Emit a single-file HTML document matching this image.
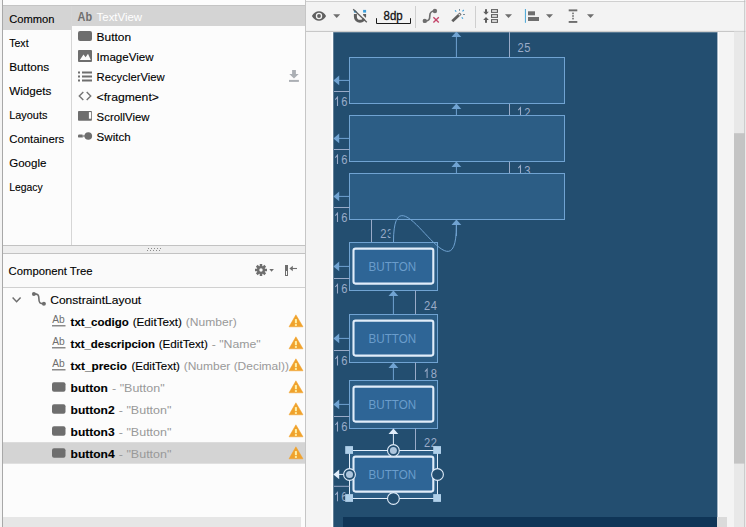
<!DOCTYPE html>
<html><head><meta charset="utf-8">
<style>
*{margin:0;padding:0}
html,body{width:746px;height:527px;overflow:hidden;background:#f2f2f2}
svg{display:block;position:absolute;left:0;top:0}
text{font-family:"Liberation Sans",sans-serif;white-space:pre}
</style></head><body>
<svg width="746" height="527" viewBox="0 0 746 527">

<rect x="0" y="0" width="746" height="527" fill="#f2f2f2"/>
<rect x="3" y="0" width="302" height="527" fill="#fcfcfc"/>
<rect x="0" y="0" width="2" height="527" fill="#f4f4f4"/>
<rect x="2" y="0" width="1" height="527" fill="#a8a8a8"/>
<rect x="3" y="5" width="302" height="1" fill="#c4c4c4"/>
<rect x="3" y="6" width="68" height="24" fill="#d4d4d4"/>
<rect x="71" y="6" width="1" height="239" fill="#d6d6d6"/>
<rect x="72" y="6" width="233" height="20" fill="#d4d4d4"/>
<rect x="305" y="0" width="1" height="527" fill="#c6c6c6"/>
<rect x="3" y="245" width="302" height="9" fill="#eeeeee"/>
<rect x="3" y="245" width="302" height="1" fill="#c2c2c2"/>
<rect x="3" y="253" width="302" height="1" fill="#c2c2c2"/>
<rect x="148" y="248" width="1" height="1" fill="#8c8c8c"/>
<rect x="147" y="250" width="1" height="1" fill="#8c8c8c"/>
<rect x="151" y="248" width="1" height="1" fill="#8c8c8c"/>
<rect x="150" y="250" width="1" height="1" fill="#8c8c8c"/>
<rect x="154" y="248" width="1" height="1" fill="#8c8c8c"/>
<rect x="153" y="250" width="1" height="1" fill="#8c8c8c"/>
<rect x="157" y="248" width="1" height="1" fill="#8c8c8c"/>
<rect x="156" y="250" width="1" height="1" fill="#8c8c8c"/>
<rect x="160" y="248" width="1" height="1" fill="#8c8c8c"/>
<rect x="159" y="250" width="1" height="1" fill="#8c8c8c"/>
<rect x="3" y="254" width="302" height="33" fill="#fafafa"/>
<rect x="3" y="287" width="302" height="1" fill="#d0d0d0"/>
<rect x="3" y="442.2" width="302" height="21.5" fill="#d4d4d4"/>
<rect x="3" y="517" width="298" height="10" fill="#e6e6e6"/>
<text x="9.2" y="22.8" font-size="11.6" font-weight="normal" fill="#000000" textLength="45.3" lengthAdjust="spacingAndGlyphs"  stroke="#000" stroke-width="0.12">Common</text>
<text x="9.2" y="46.8" font-size="11.6" font-weight="normal" fill="#000000" textLength="19.4" lengthAdjust="spacingAndGlyphs"  stroke="#000" stroke-width="0.12">Text</text>
<text x="9.2" y="70.8" font-size="11.6" font-weight="normal" fill="#000000" textLength="40" lengthAdjust="spacingAndGlyphs"  stroke="#000" stroke-width="0.12">Buttons</text>
<text x="9.2" y="94.8" font-size="11.6" font-weight="normal" fill="#000000" textLength="42.2" lengthAdjust="spacingAndGlyphs"  stroke="#000" stroke-width="0.12">Widgets</text>
<text x="9.2" y="118.8" font-size="11.6" font-weight="normal" fill="#000000" textLength="38.2" lengthAdjust="spacingAndGlyphs"  stroke="#000" stroke-width="0.12">Layouts</text>
<text x="9.2" y="142.8" font-size="11.6" font-weight="normal" fill="#000000" textLength="55" lengthAdjust="spacingAndGlyphs"  stroke="#000" stroke-width="0.12">Containers</text>
<text x="9.2" y="166.8" font-size="11.6" font-weight="normal" fill="#000000" textLength="37.2" lengthAdjust="spacingAndGlyphs"  stroke="#000" stroke-width="0.12">Google</text>
<text x="9.2" y="190.8" font-size="11.6" font-weight="normal" fill="#000000" textLength="33.5" lengthAdjust="spacingAndGlyphs"  stroke="#000" stroke-width="0.12">Legacy</text>
<text x="96.6" y="20.6" font-size="11.6" font-weight="normal" fill="#ffffff" textLength="45.5" lengthAdjust="spacingAndGlyphs" >TextView</text>
<text x="96.6" y="40.6" font-size="11.6" font-weight="normal" fill="#000000" textLength="34.5" lengthAdjust="spacingAndGlyphs"  stroke="#000" stroke-width="0.12">Button</text>
<text x="96.6" y="60.6" font-size="11.6" font-weight="normal" fill="#000000" textLength="57" lengthAdjust="spacingAndGlyphs"  stroke="#000" stroke-width="0.12">ImageView</text>
<text x="96.6" y="80.6" font-size="11.6" font-weight="normal" fill="#000000" textLength="68" lengthAdjust="spacingAndGlyphs"  stroke="#000" stroke-width="0.12">RecyclerView</text>
<text x="96.6" y="100.6" font-size="11.6" font-weight="normal" fill="#000000" textLength="62.3" lengthAdjust="spacingAndGlyphs"  stroke="#000" stroke-width="0.12">&lt;fragment&gt;</text>
<text x="96.6" y="120.6" font-size="11.6" font-weight="normal" fill="#000000" textLength="53" lengthAdjust="spacingAndGlyphs"  stroke="#000" stroke-width="0.12">ScrollView</text>
<text x="96.6" y="140.6" font-size="11.6" font-weight="normal" fill="#000000" textLength="34" lengthAdjust="spacingAndGlyphs"  stroke="#000" stroke-width="0.12">Switch</text>
<text x="77.6" y="20.6" font-size="12" font-weight="bold" fill="#6e6e6e" textLength="14.5" lengthAdjust="spacingAndGlyphs" >Ab</text>
<rect x="78" y="31" width="14" height="10" rx="2" fill="#6e6e6e"/>
<rect x="78" y="50" width="14" height="12" rx="1" fill="#6e6e6e"/>
<path d="M79.8 60 L83.5 54.6 L85.6 57.3 L88 53.7 L90.8 60 Z" fill="#fcfcfc"/>
<rect x="78" y="71.5" width="2" height="2" fill="#6e6e6e"/>
<rect x="82" y="71.5" width="10" height="2" fill="#6e6e6e"/>
<rect x="78" y="75.5" width="2" height="2" fill="#6e6e6e"/>
<rect x="82" y="75.5" width="10" height="2" fill="#6e6e6e"/>
<rect x="78" y="79.5" width="2" height="2" fill="#6e6e6e"/>
<rect x="82" y="79.5" width="10" height="2" fill="#6e6e6e"/>
<path d="M83.3 92.1 L79.3 96.1 L83.3 100.1 M86.7 92.1 L90.7 96.1 L86.7 100.1" fill="none" stroke="#747474" stroke-width="1.4"/>
<rect x="78" y="111" width="13.9" height="9.7" rx="0.8" fill="#6e6e6e"/>
<rect x="88.9" y="112.1" width="2.2" height="6.6" fill="#fcfcfc"/>
<rect x="78" y="134.4" width="5" height="3.2" rx="1.2" fill="#6e6e6e"/>
<rect x="82.5" y="134.9" width="2.5" height="2.2" fill="#a8a8a8"/>
<circle cx="88.3" cy="136" r="3.8" fill="#6e6e6e"/>
<path d="M292.1 70.1 h3.8 v3.9 h2.8 l-4.7 4.6 l-4.7 -4.6 h2.8 z" fill="#abafb4"/>
<rect x="289" y="79.9" width="9.9" height="2" fill="#abafb4"/>
<text x="8.6" y="275.2" font-size="11.6" font-weight="normal" fill="#000000" textLength="84" lengthAdjust="spacingAndGlyphs"  stroke="#000" stroke-width="0.12">Component Tree</text>
<g transform="translate(261,270)" fill="#6e6e6e"><rect x="-1.25" y="-6" width="2.5" height="12" transform="rotate(0)"/><rect x="-1.25" y="-6" width="2.5" height="12" transform="rotate(45)"/><rect x="-1.25" y="-6" width="2.5" height="12" transform="rotate(90)"/><rect x="-1.25" y="-6" width="2.5" height="12" transform="rotate(135)"/><circle r="4"/><circle r="1.7" fill="#fafafa"/></g>
<path d="M269.3 269 h4.6 l-2.3 2.8 z" fill="#6e6e6e"/>
<rect x="285" y="265" width="3" height="11" fill="#6e6e6e"/>
<rect x="286" y="271" width="1" height="4" fill="#fafafa"/>
<path d="M291 268.5 h6" fill="none" stroke="#6e6e6e" stroke-width="1.1"/><path d="M289.4 268.5 L292.8 265.7 V271.3 Z" fill="#6e6e6e"/>
<path d="M12.6 297.6 L16.6 301.7 L20.6 297.6" fill="none" stroke="#6e6e6e" stroke-width="1.5"/>
<path d="M34 293.9 C38 293.9 38.9 295 38.9 298.8 C38.9 302.6 39.8 303.8 43.9 303.8" fill="none" stroke="#6e6e6e" stroke-width="1.6"/>
<circle cx="33.9" cy="293.9" r="2" fill="#6e6e6e"/><circle cx="43.9" cy="303.8" r="2" fill="#6e6e6e"/>
<text x="50.2" y="304" font-size="11.6" font-weight="normal" fill="#000000" textLength="91" lengthAdjust="spacingAndGlyphs"  stroke="#000" stroke-width="0.12">ConstraintLayout</text>
<text x="52.3" y="323.4" font-size="10.5" font-weight="normal" fill="#6e6e6e" textLength="12.5" lengthAdjust="spacingAndGlyphs" >Ab</text>
<rect x="52" y="325.2" width="13.5" height="1.2" fill="#6e6e6e"/>
<text x="70.6" y="326" font-size="11.6" font-weight="bold" fill="#000000" textLength="58.2" lengthAdjust="spacingAndGlyphs"  stroke="#000" stroke-width="0.12">txt_codigo</text>
<text x="132.7" y="326" font-size="11.6" font-weight="normal" fill="#000000" textLength="49.2" lengthAdjust="spacingAndGlyphs"  stroke="#000" stroke-width="0.12">(EditText)</text>
<text x="185.7" y="326" font-size="11.6" font-weight="normal" fill="#999999" textLength="51" lengthAdjust="spacingAndGlyphs" >(Number)</text>
<path d="M295.9 314.8 L303 326.8 H289 Z" fill="#f0a22c" stroke="#f0a22c" stroke-width="0.5" stroke-linejoin="round"/>
<rect x="294.9" y="319.1" width="2" height="4.1" fill="#fff1a6"/><rect x="294.9" y="324.1" width="2" height="1.8" fill="#fff1a6"/>
<text x="52.3" y="345.4" font-size="10.5" font-weight="normal" fill="#6e6e6e" textLength="12.5" lengthAdjust="spacingAndGlyphs" >Ab</text>
<rect x="52" y="347.2" width="13.5" height="1.2" fill="#6e6e6e"/>
<text x="70.6" y="348" font-size="11.6" font-weight="bold" fill="#000000" textLength="84.3" lengthAdjust="spacingAndGlyphs"  stroke="#000" stroke-width="0.12">txt_descripcion</text>
<text x="158.7" y="348" font-size="11.6" font-weight="normal" fill="#000000" textLength="49.2" lengthAdjust="spacingAndGlyphs"  stroke="#000" stroke-width="0.12">(EditText)</text>
<text x="211.7" y="348" font-size="11.6" font-weight="normal" fill="#999999" textLength="49" lengthAdjust="spacingAndGlyphs" >- "Name"</text>
<path d="M295.9 336.8 L303 348.8 H289 Z" fill="#f0a22c" stroke="#f0a22c" stroke-width="0.5" stroke-linejoin="round"/>
<rect x="294.9" y="341.1" width="2" height="4.1" fill="#fff1a6"/><rect x="294.9" y="346.1" width="2" height="1.8" fill="#fff1a6"/>
<text x="52.3" y="367.4" font-size="10.5" font-weight="normal" fill="#6e6e6e" textLength="12.5" lengthAdjust="spacingAndGlyphs" >Ab</text>
<rect x="52" y="369.2" width="13.5" height="1.2" fill="#6e6e6e"/>
<text x="70.6" y="370" font-size="11.6" font-weight="bold" fill="#000000" textLength="56.3" lengthAdjust="spacingAndGlyphs"  stroke="#000" stroke-width="0.12">txt_precio</text>
<text x="131.5" y="370" font-size="11.6" font-weight="normal" fill="#000000" textLength="48.4" lengthAdjust="spacingAndGlyphs"  stroke="#000" stroke-width="0.12">(EditText)</text>
<text x="183.7" y="370" font-size="11.6" font-weight="normal" fill="#999999" textLength="105.2" lengthAdjust="spacingAndGlyphs" >(Number (Decimal))</text>
<path d="M295.9 358.8 L303 370.8 H289 Z" fill="#f0a22c" stroke="#f0a22c" stroke-width="0.5" stroke-linejoin="round"/>
<rect x="294.9" y="363.1" width="2" height="4.1" fill="#fff1a6"/><rect x="294.9" y="368.1" width="2" height="1.8" fill="#fff1a6"/>
<rect x="52" y="382.2" width="13.5" height="9.6" rx="2" fill="#6e6e6e"/>
<text x="70.6" y="392" font-size="11.6" font-weight="bold" fill="#000000" textLength="37.2" lengthAdjust="spacingAndGlyphs"  stroke="#000" stroke-width="0.12">button</text>
<text x="112" y="392" font-size="11.6" font-weight="normal" fill="#999999" textLength="52.6" lengthAdjust="spacingAndGlyphs" >- "Button"</text>
<path d="M295.9 380.8 L303 392.8 H289 Z" fill="#f0a22c" stroke="#f0a22c" stroke-width="0.5" stroke-linejoin="round"/>
<rect x="294.9" y="385.1" width="2" height="4.1" fill="#fff1a6"/><rect x="294.9" y="390.1" width="2" height="1.8" fill="#fff1a6"/>
<rect x="52" y="404.2" width="13.5" height="9.6" rx="2" fill="#6e6e6e"/>
<text x="70.6" y="414" font-size="11.6" font-weight="bold" fill="#000000" textLength="44" lengthAdjust="spacingAndGlyphs"  stroke="#000" stroke-width="0.12">button2</text>
<text x="118.8" y="414" font-size="11.6" font-weight="normal" fill="#999999" textLength="52.6" lengthAdjust="spacingAndGlyphs" >- "Button"</text>
<path d="M295.9 402.8 L303 414.8 H289 Z" fill="#f0a22c" stroke="#f0a22c" stroke-width="0.5" stroke-linejoin="round"/>
<rect x="294.9" y="407.1" width="2" height="4.1" fill="#fff1a6"/><rect x="294.9" y="412.1" width="2" height="1.8" fill="#fff1a6"/>
<rect x="52" y="426.2" width="13.5" height="9.6" rx="2" fill="#6e6e6e"/>
<text x="70.6" y="436" font-size="11.6" font-weight="bold" fill="#000000" textLength="44" lengthAdjust="spacingAndGlyphs"  stroke="#000" stroke-width="0.12">button3</text>
<text x="118.8" y="436" font-size="11.6" font-weight="normal" fill="#999999" textLength="52.6" lengthAdjust="spacingAndGlyphs" >- "Button"</text>
<path d="M295.9 424.8 L303 436.8 H289 Z" fill="#f0a22c" stroke="#f0a22c" stroke-width="0.5" stroke-linejoin="round"/>
<rect x="294.9" y="429.1" width="2" height="4.1" fill="#fff1a6"/><rect x="294.9" y="434.1" width="2" height="1.8" fill="#fff1a6"/>
<rect x="52" y="448.2" width="13.5" height="9.6" rx="2" fill="#6e6e6e"/>
<text x="70.6" y="458" font-size="11.6" font-weight="bold" fill="#000000" textLength="44" lengthAdjust="spacingAndGlyphs"  stroke="#000" stroke-width="0.12">button4</text>
<text x="118.8" y="458" font-size="11.6" font-weight="normal" fill="#999999" textLength="52.6" lengthAdjust="spacingAndGlyphs" >- "Button"</text>
<path d="M295.9 446.8 L303 458.8 H289 Z" fill="#f0a22c" stroke="#f0a22c" stroke-width="0.5" stroke-linejoin="round"/>
<rect x="294.9" y="451.1" width="2" height="4.1" fill="#fff1a6"/><rect x="294.9" y="456.1" width="2" height="1.8" fill="#fff1a6"/>
<rect x="306" y="0" width="440" height="31" fill="#f3f3f3"/>
<rect x="306" y="1" width="440" height="1" fill="#d0d0d0"/>
<rect x="306" y="0" width="440" height="1" fill="#fafafa"/>
<rect x="306" y="31" width="440" height="496" fill="#f4f4f4"/>
<rect x="306" y="30.9" width="440" height="1" fill="#c2c2c2"/>
<path d="M311.9 16 C315 9.6 323 9.6 326.1 16 C323 22.4 315 22.4 311.9 16 Z" fill="#606060"/>
<circle cx="319" cy="16" r="3.2" fill="#f3f3f3"/>
<circle cx="319" cy="16" r="1.9" fill="#606060"/>
<path d="M333.2 14.3 h7 l-3.5 3.7 z" fill="#6e6e6e"/>
<path d="M355.4 13.9 V16.7 A4.6 4.6 0 0 0 364.6 16.7 V13.9" fill="none" stroke="#5e5e5e" stroke-width="3"/>
<rect x="353.9" y="9.9" width="3" height="2.7" fill="#3592c8"/><rect x="363.1" y="9.9" width="3" height="2.7" fill="#3b9fdb"/>
<path d="M354.4 8.2 L368 21.2" stroke="#f2f2f2" stroke-width="1.8"/>
<path d="M353.2 9.2 L366.8 22.2" stroke="#5e5e5e" stroke-width="1.3"/>
<text x="383.6" y="19.9" font-size="13" font-weight="normal" fill="#111" textLength="19.1" lengthAdjust="spacingAndGlyphs" stroke="#111" stroke-width="0.3">8dp</text>
<path d="M376.5 18.2 v5.3 h34 v-5.3" fill="none" stroke="#1a1a1a" stroke-width="1"/>
<rect x="415.0" y="6" width="1" height="22" fill="#cfcfcf"/>
<rect x="475.0" y="6" width="1" height="22" fill="#cfcfcf"/>
<path d="M425 21 C429 21 429.8 19.5 429.8 16 C429.8 12.5 430.8 11 435 11" fill="none" stroke="#6e6e6e" stroke-width="1.7"/>
<circle cx="424.8" cy="20.9" r="2.2" fill="#6e6e6e"/><circle cx="434.9" cy="11" r="2.2" fill="#6e6e6e"/>
<path d="M433.4 17.3 L438.8 22.6 M438.8 17.3 L433.4 22.6" stroke="#c4456a" stroke-width="1.35"/>
<path d="M452.3 21.3 L460.6 13.4" stroke="#5e5e5e" stroke-width="2.8"/>
<circle cx="459.4" cy="14.6" r="0.9" fill="#e8e8e8"/>
<path d="M455 10.4 l1.3 1.3 M463.8 10 l-1.3 1.3 M461.7 17.3 l1.3 1.3" stroke="#3b9fdb" stroke-width="1.1"/>
<path d="M459.5 9 v1.8 M463 14.5 h2" stroke="#7a8a96" stroke-width="1"/>
<rect x="491" y="9.1" width="7" height="3.8" fill="#5e5e5e"/><rect x="492.1" y="10.2" width="4.8" height="1.6" fill="#f2f2f2"/>
<rect x="491" y="14.1" width="7" height="3.8" fill="#5e5e5e"/><rect x="492.1" y="15.2" width="4.8" height="1.6" fill="#f2f2f2"/>
<rect x="491" y="19.1" width="7" height="3.8" fill="#5e5e5e"/><rect x="492.1" y="20.2" width="4.8" height="1.6" fill="#f2f2f2"/>
<rect x="485" y="9.2" width="2" height="3.2" fill="#5e5e5e"/><path d="M483.2 11.7 H488.8 L486 14.7 Z" fill="#5e5e5e"/>
<rect x="485" y="19.8" width="2" height="3" fill="#5e5e5e"/><path d="M483.2 20 H488.8 L486 16.9 Z" fill="#5e5e5e"/>
<path d="M505 14.3 h7 l-3.5 3.7 z" fill="#6e6e6e"/>
<rect x="524.9" y="9" width="1.1" height="13.8" fill="#55acd9"/>
<rect x="528" y="11.3" width="7" height="4" fill="#6e6e6e"/>
<rect x="528" y="17" width="11" height="4" fill="#6e6e6e"/>
<path d="M546 14.3 h7 l-3.5 3.7 z" fill="#6e6e6e"/>
<rect x="568.7" y="9.4" width="8.6" height="1.9" fill="#6e6e6e"/>
<rect x="568.7" y="21" width="8.6" height="1.9" fill="#6e6e6e"/>
<rect x="572.2" y="12.6" width="1.6" height="1.6" fill="#6e6e6e"/>
<rect x="572.2" y="15.2" width="1.6" height="1.6" fill="#6e6e6e"/>
<rect x="572.2" y="17.8" width="1.6" height="1.6" fill="#6e6e6e"/>
<path d="M587 14.3 h7 l-3.5 3.7 z" fill="#6e6e6e"/>
<rect x="734" y="31.6" width="10.5" height="496" fill="#e8e8e8"/>
<rect x="734" y="133.2" width="10.6" height="330.4" fill="#c4c4c4"/>
<rect x="744.4" y="0" width="1" height="527" fill="#b6b6b6"/>
<rect x="745.4" y="0" width="0.6" height="527" fill="#f4f4f4"/>
<rect x="331.4" y="32" width="2" height="495" fill="#fcfdff"/>
<rect x="717.3" y="32" width="1.6" height="495" fill="#fcfdff"/>
<rect x="333.3" y="32" width="384.1" height="495" fill="#234e70"/>
<rect x="343" y="517" width="374.4" height="10" fill="#0f3557"/>
<rect x="333.3" y="31.7" width="384.1" height="0.9" fill="#ffffff" fill-opacity="0.4"/>
<rect x="717" y="517" width="10" height="10" fill="#dadada"/>
<g shape-rendering="auto">
<defs>
<clipPath id="c1"><rect x="333" y="32" width="384" height="83"/></clipPath>
<clipPath id="c2"><rect x="333" y="32" width="384" height="141"/></clipPath>
<clipPath id="c3"><rect x="333" y="32" width="57.5" height="400"/></clipPath>
<clipPath id="c4"><rect x="333" y="32" width="12.5" height="495"/></clipPath>
<clipPath id="cb"><rect x="333" y="32" width="384" height="495"/></clipPath>
</defs>
<path d="M509.5 32 V57 M509.5 103 V115 M509.5 161 V173" stroke="#9aabc8" stroke-width="1"/>
<g>
<text x="517.4000000000001" y="52" font-size="13.2" font-weight="normal" fill="#9aabc8" textLength="6.2" lengthAdjust="spacingAndGlyphs" >2</text>
<text x="524.2500000000001" y="52" font-size="13.2" font-weight="normal" fill="#9aabc8" textLength="6.2" lengthAdjust="spacingAndGlyphs" >5</text>
</g>
<g clip-path="url(#c1)">
<path d="M518.3000000000001 110.19999999999999 L520.5 107.69999999999999 V116.6" fill="none" stroke="#9aabc8" stroke-width="1.05" stroke-linejoin="miter"/>
<text x="524.2500000000001" y="116.6" font-size="13.2" font-weight="normal" fill="#9aabc8" textLength="6.2" lengthAdjust="spacingAndGlyphs" >2</text>
</g>
<g clip-path="url(#c2)">
<path d="M518.3000000000001 168.2 L520.5 165.7 V174.6" fill="none" stroke="#9aabc8" stroke-width="1.05" stroke-linejoin="miter"/>
<text x="524.2500000000001" y="174.6" font-size="13.2" font-weight="normal" fill="#9aabc8" textLength="6.2" lengthAdjust="spacingAndGlyphs" >3</text>
</g>
<rect x="349.5" y="57.5" width="215" height="46" fill="#2c5d85" stroke="#70a3d2" stroke-width="1"/>
<rect x="349.5" y="115.5" width="215" height="46" fill="#2c5d85" stroke="#70a3d2" stroke-width="1"/>
<rect x="349.5" y="173.5" width="215" height="46" fill="#2c5d85" stroke="#70a3d2" stroke-width="1"/>
<g clip-path="url(#cb)">
<path d="M456.4 31.5 L451.5 37.1 H461.29999999999995 Z" fill="#70a3d2"/><path d="M456.4 36.5 V57" stroke="#70a3d2" stroke-width="1"/>
</g>
<path d="M456.4 103.5 L451.5 109.1 H461.29999999999995 Z" fill="#70a3d2"/><path d="M456.4 108.5 V115" stroke="#70a3d2" stroke-width="1"/>
<path d="M456.4 161.5 L451.5 167.1 H461.29999999999995 Z" fill="#70a3d2"/><path d="M456.4 166.5 V173" stroke="#70a3d2" stroke-width="1"/>
<path d="M456.4 219.5 L451.5 225.1 H461.29999999999995 Z" fill="#70a3d2"/><path d="M456.4 224.5 V236" stroke="#70a3d2" stroke-width="1"/>
<path d="M333.4 80.4 L339.2 75.60000000000001 V85.2 Z" fill="#70a3d2"/><path d="M339 80.4 H349.5" stroke="#70a3d2" stroke-width="1"/>
<path d="M333.4 138.4 L339.2 133.6 V143.20000000000002 Z" fill="#70a3d2"/><path d="M339 138.4 H349.5" stroke="#70a3d2" stroke-width="1"/>
<path d="M333.4 196.4 L339.2 191.6 V201.20000000000002 Z" fill="#70a3d2"/><path d="M339 196.4 H349.5" stroke="#70a3d2" stroke-width="1"/>
<path d="M334 91.5 H349.5" stroke="#9aabc8" stroke-width="1"/>
<path d="M334 149.5 H349.5" stroke="#9aabc8" stroke-width="1"/>
<path d="M334 207.5 H349.5" stroke="#9aabc8" stroke-width="1"/>
<g>
<path d="M335.3 99.6 L337.5 97.1 V106" fill="none" stroke="#9aabc8" stroke-width="1.05" stroke-linejoin="miter"/>
<text x="341.25" y="106" font-size="13.2" font-weight="normal" fill="#9aabc8" textLength="6.2" lengthAdjust="spacingAndGlyphs" >6</text>
</g>
<g>
<path d="M335.3 157.6 L337.5 155.1 V164" fill="none" stroke="#9aabc8" stroke-width="1.05" stroke-linejoin="miter"/>
<text x="341.25" y="164" font-size="13.2" font-weight="normal" fill="#9aabc8" textLength="6.2" lengthAdjust="spacingAndGlyphs" >6</text>
</g>
<g>
<path d="M335.3 215.6 L337.5 213.1 V222" fill="none" stroke="#9aabc8" stroke-width="1.05" stroke-linejoin="miter"/>
<text x="341.25" y="222" font-size="13.2" font-weight="normal" fill="#9aabc8" textLength="6.2" lengthAdjust="spacingAndGlyphs" >6</text>
</g>
<path d="M371.5 219.5 V242.5" stroke="#9aabc8" stroke-width="1"/>
<g clip-path="url(#c3)">
<text x="380.2" y="238.4" font-size="13.2" font-weight="normal" fill="#9aabc8" textLength="6.2" lengthAdjust="spacingAndGlyphs" >2</text>
<text x="387.05" y="238.4" font-size="13.2" font-weight="normal" fill="#9aabc8" textLength="6.2" lengthAdjust="spacingAndGlyphs" >3</text>
</g>
<rect x="349.5" y="242.5" width="88" height="48" fill="#2c5d85" stroke="#70a3d2" stroke-width="1"/>
<rect x="353.5" y="248.6" width="79.8" height="35" rx="2" fill="#2e6596" stroke="#e1edfa" stroke-width="2.1"/>
<text x="368.5" y="270.8" font-size="13.2" font-weight="normal" fill="#6a9dcc" textLength="47.6" lengthAdjust="spacingAndGlyphs" >BUTTON</text>
<path d="M393.5 242 C393.5 158 456.4 309 456.4 225" fill="none" stroke="#70a3d2" stroke-width="1"/>
<path d="M333.4 266.4 L339.2 261.59999999999997 V271.2 Z" fill="#70a3d2"/><path d="M339 266.4 H349.5" stroke="#70a3d2" stroke-width="1"/>
<path d="M334 278.5 H349.5" stroke="#9aabc8" stroke-width="1"/>
<g>
<path d="M335.3 287.0 L337.5 284.5 V293.4" fill="none" stroke="#9aabc8" stroke-width="1.05" stroke-linejoin="miter"/>
<text x="341.25" y="293.4" font-size="13.2" font-weight="normal" fill="#9aabc8" textLength="6.2" lengthAdjust="spacingAndGlyphs" >6</text>
</g>
<path d="M393.4 290.5 L388.5 296.1 H398.29999999999995 Z" fill="#70a3d2"/><path d="M393.4 295.5 V314" stroke="#70a3d2" stroke-width="1"/>
<path d="M415.5 290.5 V314" stroke="#9aabc8" stroke-width="1"/>
<g>
<text x="424.0" y="310" font-size="13.2" font-weight="normal" fill="#9aabc8" textLength="6.2" lengthAdjust="spacingAndGlyphs" >2</text>
<text x="430.85" y="310" font-size="13.2" font-weight="normal" fill="#9aabc8" textLength="6.2" lengthAdjust="spacingAndGlyphs" >4</text>
</g>
<rect x="349.5" y="314.5" width="88" height="48" fill="#2c5d85" stroke="#70a3d2" stroke-width="1"/>
<rect x="353.5" y="320.6" width="79.8" height="35" rx="2" fill="#2e6596" stroke="#e1edfa" stroke-width="2.1"/>
<text x="368.5" y="342.8" font-size="13.2" font-weight="normal" fill="#6a9dcc" textLength="47.6" lengthAdjust="spacingAndGlyphs" >BUTTON</text>
<path d="M333.4 338.4 L339.2 333.59999999999997 V343.2 Z" fill="#70a3d2"/><path d="M339 338.4 H349.5" stroke="#70a3d2" stroke-width="1"/>
<path d="M334 350.5 H349.5" stroke="#9aabc8" stroke-width="1"/>
<g>
<path d="M335.3 359.0 L337.5 356.5 V365.4" fill="none" stroke="#9aabc8" stroke-width="1.05" stroke-linejoin="miter"/>
<text x="341.25" y="365.4" font-size="13.2" font-weight="normal" fill="#9aabc8" textLength="6.2" lengthAdjust="spacingAndGlyphs" >6</text>
</g>
<path d="M393.4 362.5 L388.5 368.1 H398.29999999999995 Z" fill="#70a3d2"/><path d="M393.4 367.5 V380" stroke="#70a3d2" stroke-width="1"/>
<path d="M415.5 362.5 V380" stroke="#9aabc8" stroke-width="1"/>
<g>
<path d="M424.90000000000003 371.6 L427.1 369.1 V378" fill="none" stroke="#9aabc8" stroke-width="1.05" stroke-linejoin="miter"/>
<text x="430.85" y="378" font-size="13.2" font-weight="normal" fill="#9aabc8" textLength="6.2" lengthAdjust="spacingAndGlyphs" >8</text>
</g>
<rect x="349.5" y="380.5" width="88" height="48" fill="#2c5d85" stroke="#70a3d2" stroke-width="1"/>
<rect x="353.5" y="386.6" width="79.8" height="35" rx="2" fill="#2e6596" stroke="#e1edfa" stroke-width="2.1"/>
<text x="368.5" y="408.8" font-size="13.2" font-weight="normal" fill="#6a9dcc" textLength="47.6" lengthAdjust="spacingAndGlyphs" >BUTTON</text>
<path d="M333.4 404.4 L339.2 399.59999999999997 V409.2 Z" fill="#70a3d2"/><path d="M339 404.4 H349.5" stroke="#70a3d2" stroke-width="1"/>
<path d="M334 416.5 H349.5" stroke="#9aabc8" stroke-width="1"/>
<g>
<path d="M335.3 425.0 L337.5 422.5 V431.4" fill="none" stroke="#9aabc8" stroke-width="1.05" stroke-linejoin="miter"/>
<text x="341.25" y="431.4" font-size="13.2" font-weight="normal" fill="#9aabc8" textLength="6.2" lengthAdjust="spacingAndGlyphs" >6</text>
</g>
<path d="M393.4 428.5 L388.5 434.1 H398.29999999999995 Z" fill="#e1edfa"/><path d="M393.4 433.5 V446" stroke="#e1edfa" stroke-width="1"/>
<path d="M415.5 428.5 V450" stroke="#9aabc8" stroke-width="1"/>
<g>
<text x="424.0" y="446.6" font-size="13.2" font-weight="normal" fill="#9aabc8" textLength="6.2" lengthAdjust="spacingAndGlyphs" >2</text>
<text x="430.85" y="446.6" font-size="13.2" font-weight="normal" fill="#9aabc8" textLength="6.2" lengthAdjust="spacingAndGlyphs" >2</text>
</g>
<rect x="349.5" y="450.5" width="88" height="48" fill="#2c5d85" stroke="#e1edfa" stroke-width="1"/>
<rect x="353.5" y="456.6" width="79.8" height="35" rx="2" fill="#2e6596" stroke="#e1edfa" stroke-width="2.1"/>
<text x="368.5" y="478.8" font-size="13.2" font-weight="normal" fill="#6a9dcc" textLength="47.6" lengthAdjust="spacingAndGlyphs" >BUTTON</text>
<path d="M333.4 474.4 L339.2 469.59999999999997 V479.2 Z" fill="#e1edfa"/><path d="M339 474.4 H349.5" stroke="#e1edfa" stroke-width="1"/>
<path d="M334 486.3 H349.5" stroke="#9aabc8" stroke-width="1"/>
<g clip-path="url(#c4)">
<path d="M335.3 494.8 L337.5 492.3 V501.2" fill="none" stroke="#9aabc8" stroke-width="1.05" stroke-linejoin="miter"/>
<text x="341.25" y="501.2" font-size="13.2" font-weight="normal" fill="#9aabc8" textLength="6.2" lengthAdjust="spacingAndGlyphs" >6</text>
</g>
<rect x="345.2" y="446.1" width="7.8" height="7.8" fill="#b0d0ea"/>
<rect x="433.2" y="446.1" width="7.8" height="7.8" fill="#b0d0ea"/>
<rect x="345.2" y="494.1" width="7.8" height="7.8" fill="#b0d0ea"/>
<rect x="433.2" y="494.1" width="7.8" height="7.8" fill="#b0d0ea"/>
<circle cx="393.4" cy="450.5" r="5.9" fill="#234e70" stroke="#e1edfa" stroke-width="1.1"/>
<circle cx="393.4" cy="450.5" r="3.5" fill="#aec6de"/>
<circle cx="349.5" cy="474.5" r="5.9" fill="#234e70" stroke="#e1edfa" stroke-width="1.1"/>
<circle cx="349.5" cy="474.5" r="3.5" fill="#aec6de"/>
<circle cx="437.5" cy="474.5" r="5.9" fill="#234e70" stroke="#e1edfa" stroke-width="1.1"/>
<circle cx="393.4" cy="498.5" r="5.9" fill="#234e70" stroke="#e1edfa" stroke-width="1.1"/>
</g>
</svg></body></html>
